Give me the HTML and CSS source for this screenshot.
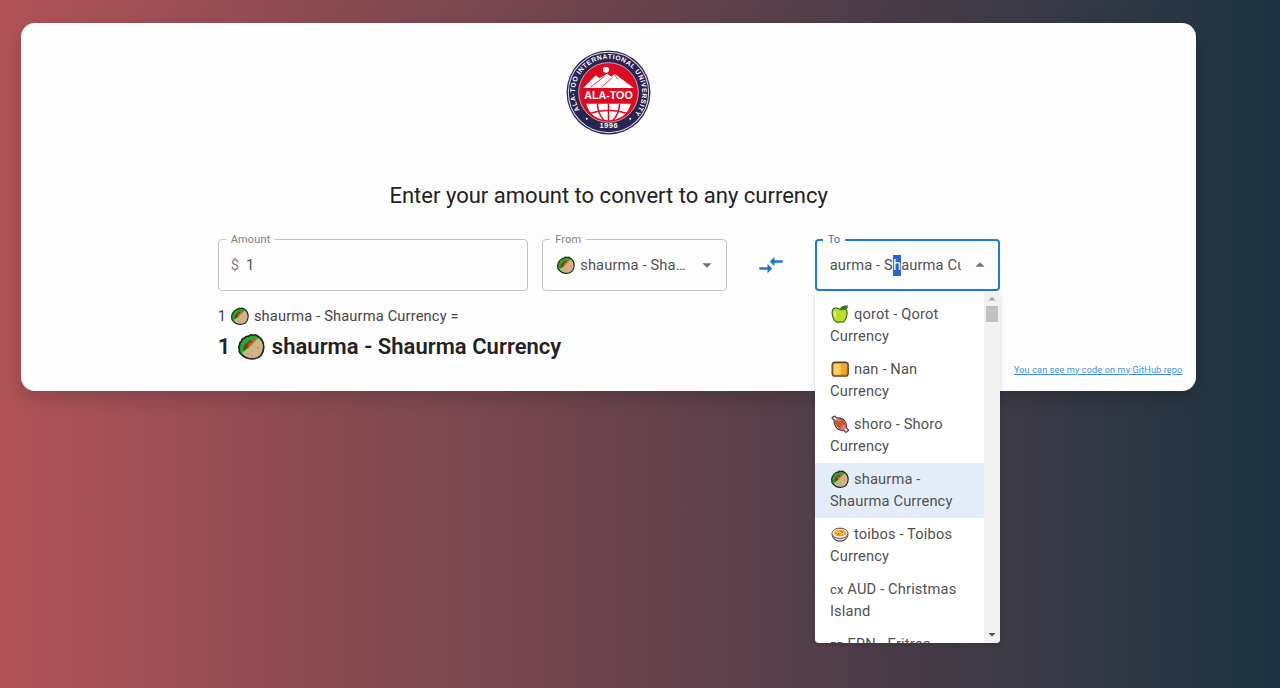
FILE: index.html
```html
<!DOCTYPE html>
<html lang="en">
<head>
<meta charset="utf-8">
<title>Currency converter</title>
<link rel="stylesheet" href="styles.css">
</head>
<body>
<svg class="sprite" aria-hidden="true">
  <symbol id="wrap" viewBox="0 0 24 24">
    <path d="M2.600 18.500Q.5 17 1.300 14.500 0 12.500 1.500 10.800 1 8.300 3 7.500 3.300 5 5.700 4.600 7 2.400 9.300 3 11 .8 13.200 2 15.500.9 17 2.500 22.900 5.500 22.900 12.700 22.400 22.800 12.500 23.100 6 22.900 2.600 18.500Z" fill="#1fae2c" stroke="#1d241c" stroke-width="1.500"/>
    <path d="M4.500 17 5 11.500 9.500 7 13 6 12 14Z" fill="#7a3d22"/>
    <path d="M8.500 12 10 8.500 12 8.500 12.500 5.500 17.500 4.500 18 7.500 11 14Z" fill="#f4432f"/>
    <path d="M4 18.500 10.500 13.500 18.800 5Q22.100 7.800 22 12.700 21.500 21.900 12.500 22.300 7 22.100 4 18.500Z" fill="#d9b08e"/>
    <path d="M4 18 10 13.500 18.300 5" fill="none" stroke="#6fe36a" stroke-width="1.400"/>
    <path d="M8 18.500h1.500M11.500 20h1.500M17 13h1.500M12 16h1" stroke="#b38362"/>
  </symbol>
  <symbol id="apple" viewBox="0 0 24 24">
    <path d="M11 5.500Q7 3 3.500 4.500 .5 7 2 14 3.500 21 7 22.500 10.500 23.500 12.500 22.300 15.500 23.500 17.500 22 21 18 21.600 11 21.500 6 18.500 6L21.500 3.500V1.500Q15 1 12.500 5Z" fill="#b7df24" stroke="#405522" stroke-width="1.500"/>
    <path d="M11.500 6.500Q13 1.500 21 2 20 7 14 7Z" fill="#238333"/>
    <path d="M5 9Q4.500 13 6.500 16" fill="none" stroke="#e8f47c" stroke-width="2.500"/>
  </symbol>
  <symbol id="bread" viewBox="0 0 24 24">
    <rect x="1.500" y="3" width="21.500" height="18.500" rx="4" fill="#d88c1b" stroke="#5c4425" stroke-width="1.700"/>
    <rect x="3.500" y="5" width="10" height="14.500" rx="2" fill="#ffcf60"/>
    <path d="M13 5h8v4l-1 2v8h-7" fill="#efa82f"/>
  </symbol>
  <symbol id="meat" viewBox="0 0 24 24">
    <path d="M1.500 4.500Q1 2 3.500 2.500 4 .5 6 2L7 4Q15 3 19 9 21 12 20.500 17L23 19.500Q24 21.500 21.500 21.500 21 24 19 22.500L17 20.500Q8 20.500 5.500 14 3.500 10 4.500 7Z" fill="#eee3d9" stroke="#4a3030" stroke-width="1.500"/>
    <path d="M5.500 7Q14 2.500 18.500 10 21 15 18.500 19 10 20.500 6.500 13 4.500 10 5.500 7Z" fill="#c45a2b"/>
    <ellipse cx="16" cy="16.500" rx="4" ry="2.600" transform="rotate(-50 16 16.500)" fill="#ff647a"/>
    <path d="M8 8Q10 6.500 12.500 8" fill="none" stroke="#e38c54" stroke-width="1.500"/>
  </symbol>
  <symbol id="bowl" viewBox="0 0 24 24">
    <ellipse cx="12" cy="13" rx="10.500" ry="8.500" fill="#dedede" stroke="#5b5650" stroke-width="1.500"/>
    <ellipse cx="12" cy="11" rx="10.800" ry="6.800" fill="#f8f5ee" stroke="#5b5650" stroke-width="1.300"/>
    <ellipse cx="12" cy="10.500" rx="8" ry="4.600" fill="#f0a51e"/>
    <path d="M6 9h5l2 2h5" fill="none" stroke="#ffd456" stroke-width="1.500"/>
    <path d="M9 12h2m3-2.500h2" stroke="#c85c12" stroke-width="1.800"/>
  </symbol>
</svg>

<main class="card">
  <svg class="logo" viewBox="0 0 84 84" role="img" aria-label="Ala-Too International University">
    <defs>
      <path id="ring" d="M16.500 63.500A33.300 33.300 0 1 1 67.500 63.500"/>
      <clipPath id="globe"><path d="M20 53H64Q60 69 42 70 24 69 20 53Z"/></clipPath>
    </defs>
    <circle cx="42" cy="42" r="41.500" fill="#292452"/>
    <circle cx="42" cy="42" r="39.700" fill="none" stroke="#dedee8" stroke-width="1"/>
    <circle cx="42" cy="42" r="29.500" fill="#df0920" stroke="#fff" stroke-width=".6"/>
    <circle cx="39.500" cy="19.500" r="3" fill="#fff"/>
    <path d="M17 37.500 29.500 25 33 28 40.500 23.500 45 26.500 48 23.500 67 37.500Z" fill="#fff"/>
    <path d="M24 37 38 26M35 37 46 27M48 24 51 29" stroke="#df0920" stroke-width=".8"/>
    <path d="M20 53H64Q60 68.500 42 69.500 24 68.500 20 53Z" fill="#fff"/>
    <g clip-path="url(#globe)" fill="none" stroke="#df0920" stroke-width="1.500">
      <path d="M42 52V70M22 63Q42 56 62 63M31 52Q31 63 38 70M53 52Q53 63 46 70"/>
    </g>
    <text class="logo-name" x="42" y="48.600" text-anchor="middle" textLength="48" lengthAdjust="spacingAndGlyphs">ALA-TOO</text>
    <text class="logo-ring"><textPath href="#ring" startOffset="5" textLength="145">ALA-TOO INTERNATIONAL UNIVERSITY</textPath></text>
    <text class="logo-year" x="42" y="77.300" text-anchor="middle" textLength="18">1996</text>
    <circle cx="20.500" cy="68" r="1" fill="#fff"/><circle cx="63.500" cy="68" r="1" fill="#fff"/>
  </svg>
  <h1 class="title">Enter your amount to convert to any currency</h1>

  <section class="form">
    <div class="field amount"><span class="label">Amount</span><span class="prefix">$</span><span>1</span></div>
    <div class="field from"><span class="label">From</span>
      <svg class="emoji"><use href="#wrap"/></svg><span class="value">shaurma - Shaurma Currency</span>
      <svg class="arrow" viewBox="0 0 24 24"><path d="M7 10l5 5 5-5z"/></svg>
    </div>
    <div class="swap"><svg viewBox="0 0 24 24"><path d="M9.010 14H2v2h7.010v3L13 15l-3.990-4v3zm5.980-1v-3H22V8h-7.010V5L11 9l3.990 4z"/></svg></div>
    <div class="field to"><span class="label">To</span>
      <span class="value typed">aurma - S<span class="selected-text">h</span>aurma Currency</span>
      <svg class="arrow" viewBox="0 0 24 24"><path d="M7 14l5-5 5 5z"/></svg>
      <div class="menu">
        <ul class="options">
          <li><svg class="emoji"><use href="#apple"/></svg>qorot - Qorot Currency</li>
          <li><svg class="emoji"><use href="#bread"/></svg>nan - Nan Currency</li>
          <li><svg class="emoji"><use href="#meat"/></svg>shoro - Shoro Currency</li>
          <li class="active"><svg class="emoji"><use href="#wrap"/></svg>shaurma - Shaurma Currency</li>
          <li><svg class="emoji"><use href="#bowl"/></svg>toibos - Toibos Currency</li>
          <li><span class="flag">cx</span> AUD - Christmas Island</li>
          <li><span class="flag">ᴇʀ</span> ERN - Eritrea</li>
        </ul>
        <div class="scrollbar">
          <svg class="scroll-up" viewBox="0 0 16 16"><path d="M4.500 9.500 8 6l3.500 3.500z"/></svg>
          <div class="thumb"></div>
          <svg class="scroll-down" viewBox="0 0 16 16"><path d="M4.500 6 8 9.500 11.500 6z"/></svg>
        </div>
      </div>
    </div>
  </section>

  <section class="result">
    <p class="result-from">1 <svg class="emoji"><use href="#wrap"/></svg>shaurma - Shaurma Currency =</p>
    <p class="result-to">1 <svg class="emoji"><use href="#wrap"/></svg>shaurma - Shaurma Currency</p>
  </section>
  <a class="repo" href="#">You can see my code on my GitHub repo</a>
</main>
</body>
</html>
```
FILE: styles.css
```css
* { box-sizing: border-box; }
body {
  margin: 0;
  height: 688px;
  overflow: hidden;
  padding: 23px 84px 0 21px;
  background: linear-gradient(to right, #b05358, #1d3341);
  font: 14.667px/22px Roboto, sans-serif;
  letter-spacing: .15px;
  color: #505050;
}
.sprite { position: absolute; width: 0; height: 0; }
.card {
  position: relative;
  display: flex;
  flex-direction: column;
  align-items: center;
  width: 1175.400px;
  height: 367.500px;
  padding-top: 27px;
  border-radius: 14px;
  background: #fdfdfd;
  box-shadow: 0 8px 18px rgba(0, 0, 0, .16);
}
.logo { width: 85px; height: 85px; flex: none; }
.logo text { font-family: "Liberation Sans", sans-serif; font-weight: 700; fill: #fff; letter-spacing: 0; }
.logo .logo-name { font-size: 11.500px; }
.logo .logo-ring { font-size: 6.600px; }
.logo .logo-year { font-size: 7.500px; }
.title {
  margin: 46px 0 0;
  font-size: 22px;
  font-weight: 400;
  line-height: 30px;
  letter-spacing: .01px;
  color: #222;
}
.form { display: flex; width: 782px; margin-top: 28px; }
.field {
  position: relative;
  display: flex;
  align-items: center;
  height: 52px;
  padding: 0 12px;
  border: 1px solid #c4c4c4;
  border-radius: 4px;
}
.label {
  position: absolute;
  top: -8px;
  left: 7px;
  padding: 0 5px;
  background: #fdfdfd;
  font-size: 11px;
  line-height: 16px;
  color: #808080;
}
.amount { width: 310px; }
.prefix { margin-right: 7px; color: #808080; }
.from { width: 185px; margin-left: 14.500px; padding-left: 13px; }
.emoji {
  display: inline-block;
  flex: none;
  width: 18px;
  height: 18px;
  margin: 0 5px 0 1px;
  vertical-align: -4px;
}
.value { overflow: hidden; white-space: nowrap; text-overflow: ellipsis; }
.from .value { width: 110px; flex: none; }
.arrow { flex: none; width: 22px; height: 22px; margin-left: 6px; fill: #707070; }
.swap { display: flex; align-items: center; justify-content: center; width: 87.500px; }
.swap svg { width: 28px; height: 28px; fill: #1976d2; }
.to { width: 185px; border: 2px solid #1f7bd8; padding: 0 13px; }
.to .label { top: -9px; left: 6px; color: #1976d2; }
.typed { width: 131px; flex: none; text-overflow: clip; }
.to .arrow { margin-left: 8px; }
.selected-text { display: inline-block; line-height: 21px; background: #2a62d9; color: #fff; }
.menu {
  position: absolute;
  z-index: 2;
  top: 50px;
  left: -2px;
  display: flex;
  width: 185px;
  height: 352px;
  overflow: hidden;
  border-radius: 4px;
  background: #fff;
  box-shadow: 0 2px 5px rgba(0, 0, 0, .16);
}
.options { flex: 1; margin: 0; padding: 7px 0; list-style: none; }
.options li { height: 55px; padding: 4.500px 13.500px 5px 15.300px; }
.options .active { background: #e3edf9; }
.flag { font-size: 13px; line-height: 1; }
.scrollbar { display: flex; flex-direction: column; width: 16px; background: #f1f1f1; }
.scrollbar svg { width: 16px; height: 16px; }
.thumb { width: 12px; height: 16px; margin: -1px 0 0 2px; background: #c1c1c1; }
.scroll-up { fill: #a3a3a3; }
.scroll-down { margin-top: auto; fill: #505050; }
.result { width: 782px; margin-top: 13px; }
.result p { margin: 0; white-space: nowrap; }
.result-from { line-height: 24px; color: #444; }
.result .result-to {
  padding-top: 2px;
  font-size: 22px;
  font-weight: 600;
  line-height: 34px;
  letter-spacing: .04px;
  color: #222;
}
.result-to .emoji { width: 27px; height: 27px; margin: 0 7px 0 2px; vertical-align: -6px; }
.repo {
  position: absolute;
  right: 14px;
  bottom: 13px;
  font-size: 9.170px;
  line-height: 16px;
  letter-spacing: .11px;
  color: #3f8fe0;
}
```
